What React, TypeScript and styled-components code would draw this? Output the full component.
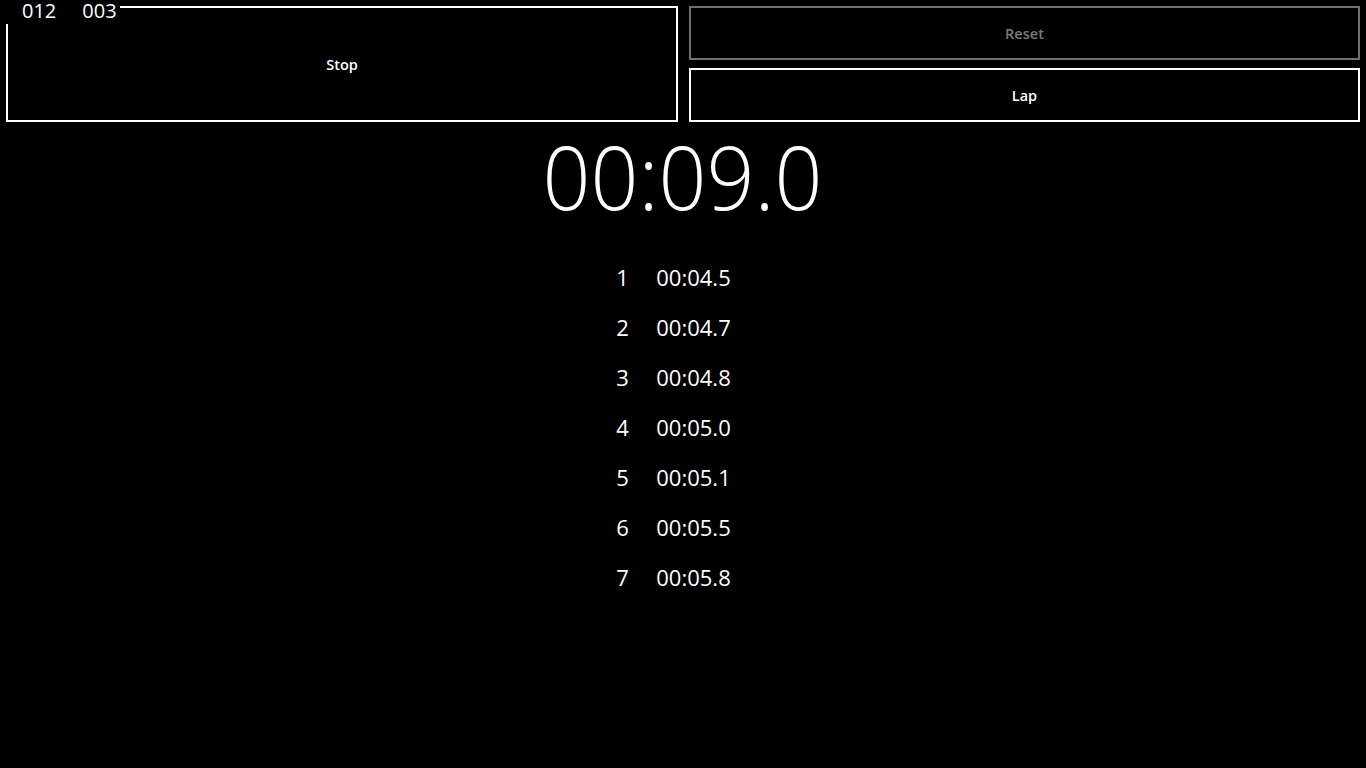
import React from "react";
import styled, { createGlobalStyle } from "styled-components";

const Global = createGlobalStyle`
  html, body {
    margin: 0;
    padding: 0;
    background: #000;
    color: #fff;
    font-family: "Open Sans", "Noto Sans", sans-serif;
  }
  #root { min-height: 768px; }
`;

const Page = styled.div`
  position: relative;
  width: 1366px;
  height: 768px;
  background: #000;
  overflow: hidden;
`;

const Controls = styled.div`
  display: grid;
  grid-template-columns: 672px 671px;
  column-gap: 11px;
  padding: 6px 0 0 6px;
  height: 116px;
`;

const Stack = styled.div`
  display: flex;
  flex-direction: column;
  gap: 8px;
`;

const Button = styled.button<{ $disabled?: boolean; $tall?: boolean }>`
  box-sizing: border-box;
  width: 100%;
  height: ${(p) => (p.$tall ? "116px" : "54px")};
  margin: 0;
  padding: 0;
  background: #000;
  border: 2px solid ${(p) => (p.$disabled ? "#6f6f6f" : "#ffffff")};
  color: ${(p) => (p.$disabled ? "#7a7a7a" : "#ffffff")};
  font-family: "Open Sans", "Noto Sans", sans-serif;
  font-weight: 600;
  font-size: 14.5px;
  display: flex;
  align-items: center;
  justify-content: center;
  cursor: pointer;
`;

const Counter = styled.div`
  position: absolute;
  left: 0;
  top: 0;
  width: 120px;
  height: 24px;
  background: #000;
  display: flex;
  align-items: flex-start;
  gap: 26px;
  padding: 2px 0 0 22px;
  box-sizing: border-box;
  font-size: 20px;
  line-height: 18px;
  color: #fff;
`;

const Time = styled.div`
  margin-top: 10px;
  height: 88px;
  display: flex;
  justify-content: center;
`;

const TimeText = styled.span`
  display: inline-block;
  font-family: "Open Sans", "Noto Sans", sans-serif;
  font-weight: 300;
  font-size: 88px;
  line-height: 88px;
  transform: scaleX(0.955);
  transform-origin: center;
`;

const Laps = styled.div`
  margin-top: 32px;
  display: flex;
  justify-content: center;
  padding-right: 19px;
`;

const LapGrid = styled.div`
  display: grid;
  grid-template-columns: 40px auto;
  font-size: 22px;
  line-height: 50px;
`;

const LapNo = styled.span``;
const LapTime = styled.span``;

const laps = ["00:04.5", "00:04.7", "00:04.8", "00:05.0", "00:05.1", "00:05.5", "00:05.8"];

export default function App() {
  return (
    <Page>
      <Global />
      <Controls>
        <Button $tall>Stop</Button>
        <Stack>
          <Button $disabled>Reset</Button>
          <Button>Lap</Button>
        </Stack>
      </Controls>
      <Counter>
        <span>012</span>
        <span>003</span>
      </Counter>
      <Time>
        <TimeText>00:09.0</TimeText>
      </Time>
      <Laps>
        <LapGrid>
          {laps.map((t, i) => (
            <React.Fragment key={i}>
              <LapNo>{i + 1}</LapNo>
              <LapTime>{t}</LapTime>
            </React.Fragment>
          ))}
        </LapGrid>
      </Laps>
    </Page>
  );
}
